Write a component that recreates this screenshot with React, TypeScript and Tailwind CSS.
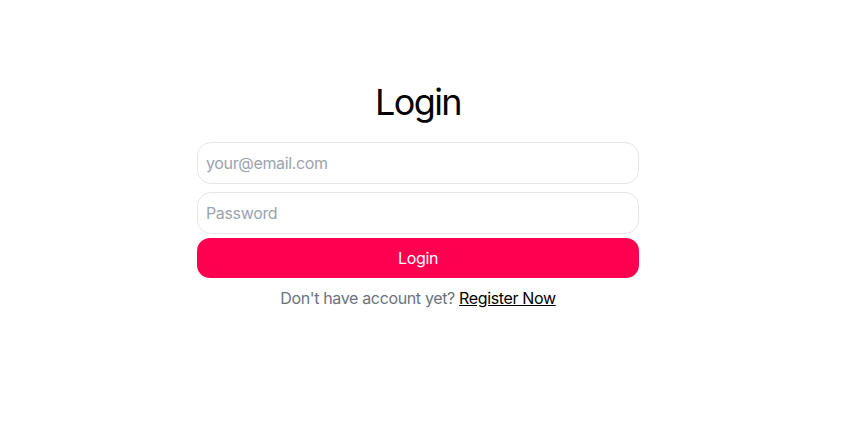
import React from 'react';

const App: React.FC = () => {
    return (
        <div className="min-h-screen bg-white flex justify-center pr-[21px] pt-[82px] tracking-[-0.022em]" style={{ fontFamily: 'Inter, "Noto Sans", sans-serif' }}>
            <div className="w-[442px] flex flex-col">
                <h1 className="text-[36px] leading-[40px] font-normal text-black text-center tracking-[-0.045em]">Login</h1>

                <input
                    type="email"
                    placeholder="your@email.com"
                    className="mt-[20px] h-[42px] w-full rounded-[14px] border border-[#e5e7eb] bg-white px-[8px] text-[16px] text-black placeholder:text-[#9ca3af] outline-none"
                />
                <input
                    type="password"
                    placeholder="Password"
                    className="mt-[8px] h-[42px] w-full rounded-[14px] border border-[#e5e7eb] bg-white px-[8px] text-[16px] text-black placeholder:text-[#9ca3af] outline-none"
                />
                <button className="mt-[4px] h-[40px] w-full rounded-[13px] bg-[#ff0050] text-[16px] text-white">
                    Login
                </button>

                <p className="mt-[8px] text-center text-[16px] leading-[24px] text-[#6b7280]">
                    Don't have account yet? <a href="#" className="text-black underline">Register Now</a>
                </p>
            </div>
        </div>
    );
};

export default App;
